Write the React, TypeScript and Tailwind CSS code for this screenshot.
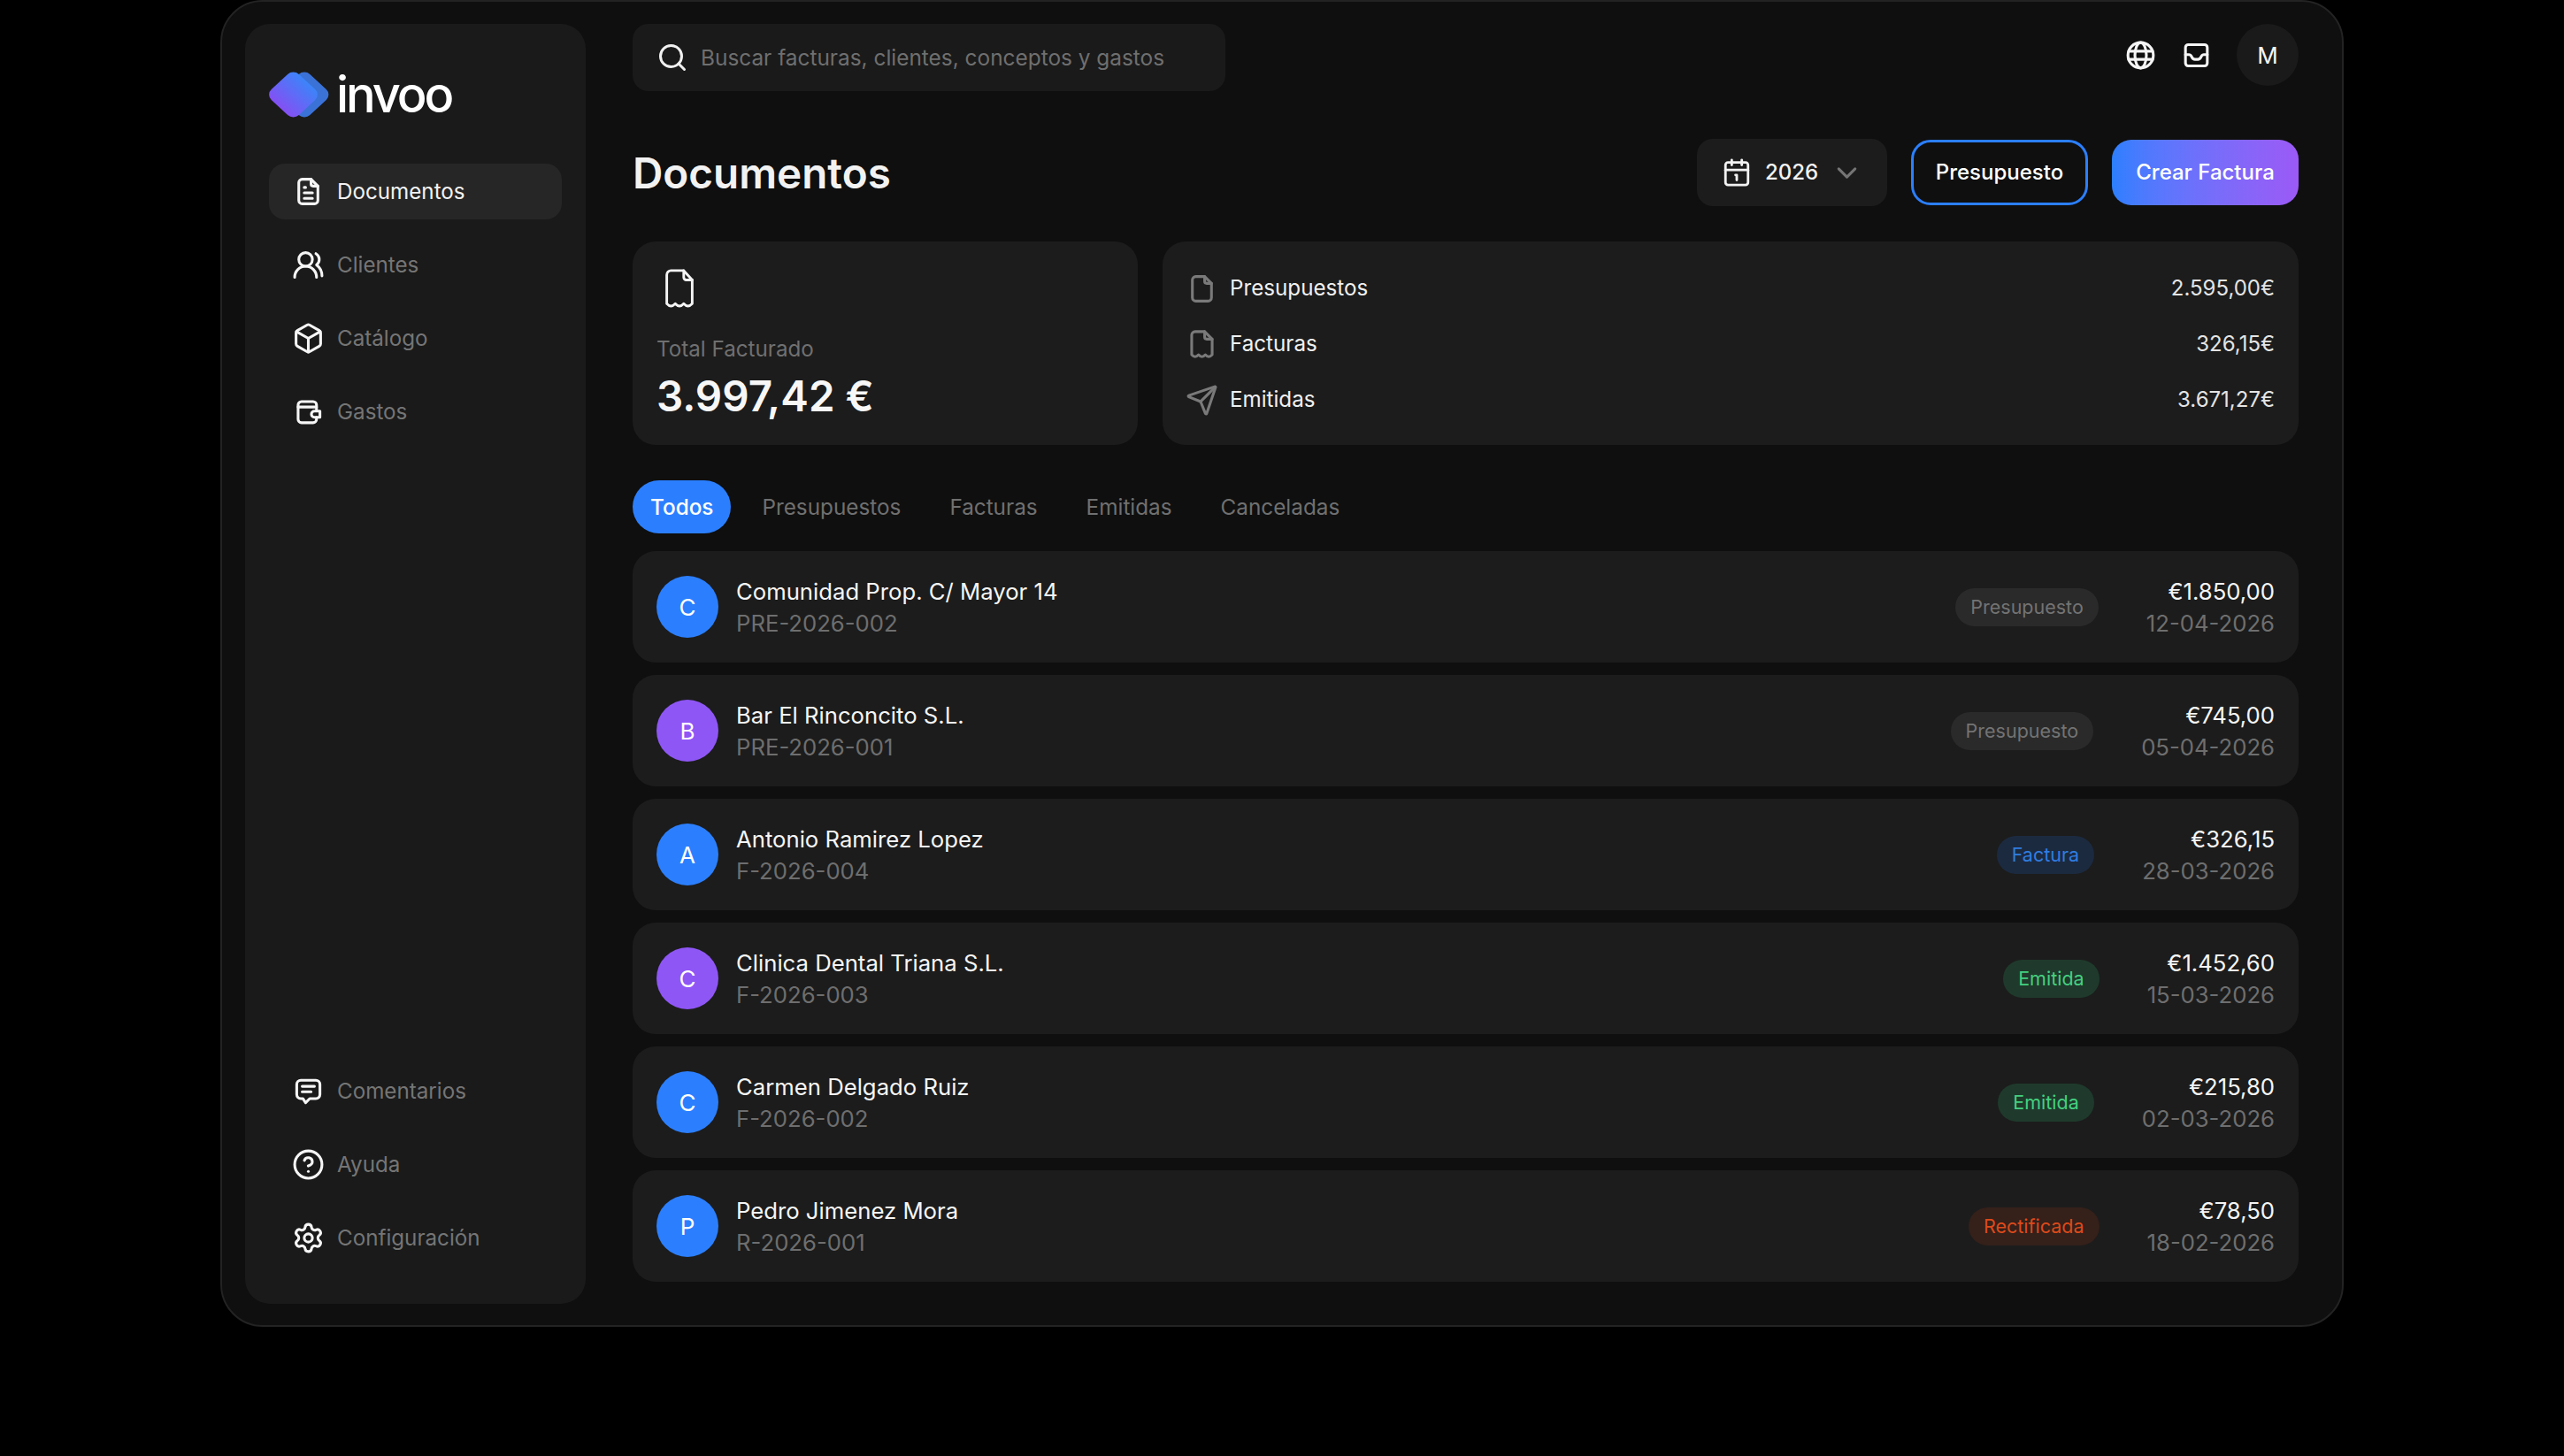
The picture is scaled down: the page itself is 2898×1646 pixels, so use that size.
import React from "react";
import { Search, UsersRound, Box, CircleHelp, Settings, ChevronDown, Send, Calendar1 } from "lucide-react";

type IconProps = { className?: string };

const Svg = ({ className, children, sw = 2 }: IconProps & { children: React.ReactNode; sw?: number }) => (
  <svg viewBox="0 0 24 24" fill="none" stroke="currentColor" strokeWidth={sw} strokeLinecap="round" strokeLinejoin="round" className={className}>
    {children}
  </svg>
);

const DocText = ({ className }: IconProps) => (
  <Svg className={className}>
    <path d="M7.500 3h6.500L19 8v10.500a2.500 2.500 0 0 1-2.500 2.500h-9A2.500 2.500 0 0 1 5 18.500v-13A2.500 2.500 0 0 1 7.500 3z" />
    <path d="M14 3v3.500A1.500 1.500 0 0 0 15.500 8H19" />
    <path d="M9 9h1M9 13h6M9 17h6" />
  </Svg>
);
const FilePlain = ({ className }: IconProps) => (
  <Svg className={className}>
    <path d="M7.500 3h6.500L19 8v10.500a2.500 2.500 0 0 1-2.500 2.500h-9A2.500 2.500 0 0 1 5 18.500v-13A2.500 2.500 0 0 1 7.500 3z" />
    <path d="M14 3v3.500A1.500 1.500 0 0 0 15.500 8H19" />
  </Svg>
);
const FileReceipt = ({ className }: IconProps) => (
  <Svg className={className}>
    <path d="M7 2.500h7L19.500 8v11.500q-2.500 2.800-5 0q-2.500 2.800-5 0q-2.500 2.800-5 0V5A2.500 2.500 0 0 1 7 2.500z" />
    <path d="M14 2.500v4A1.500 1.500 0 0 0 15.500 8h4" />
  </Svg>
);
const FileReceiptLarge = ({ className }: IconProps) => (
  <Svg className={className} sw={1.5}>
    <path d="M7 1h7.500l5 5.500V20.500q-2.500 2.800-5 0q-2.500 2.800-5 0q-2.500 2.800-5 0V3.500A2.500 2.500 0 0 1 7 1z" />
    <path d="M14.500 1v4A1.500 1.500 0 0 0 16 6.500h3.500" />
  </Svg>
);
const Wallet = ({ className }: IconProps) => (
  <Svg className={className}>
    <path d="M18 11V7a2.500 2.500 0 0 0-2.500-2.500H7A2.500 2.500 0 0 0 4.500 7v10.500A2.500 2.500 0 0 0 7 20h8.500a2.500 2.500 0 0 0 2.500-2.500V16" />
    <path d="M4.500 8.500H18" />
    <path d="M20.500 11.500h-4a2.250 2.250 0 0 0 0 4.500h4z" />
  </Svg>
);
const Comment = ({ className }: IconProps) => (
  <Svg className={className}>
    <path d="M6.500 4h11a3 3 0 0 1 3 3v7.500a3 3 0 0 1-3 3H13l-3 3-2-3H6.500a3 3 0 0 1-3-3V7a3 3 0 0 1 3-3z" />
    <path d="M7.500 8.500h9M7.500 12.500h6.500" />
  </Svg>
);
const GlobeGrid = ({ className }: IconProps) => (
  <Svg className={className}>
    <circle cx="12" cy="12" r="9.300" />
    <ellipse cx="12" cy="12" rx="4.200" ry="9.300" />
    <path d="M3.200 9h17.600M3.200 15h17.600" />
  </Svg>
);
const Tray = ({ className }: IconProps) => (
  <Svg className={className}>
    <rect x="4" y="4.250" width="16" height="15.500" rx="2" />
    <path d="M4 11.500h2.500c1 0 1.500.5 2 1.500.5 1.200 1.300 2 2.500 2h2c1.200 0 2-.8 2.500-2 .5-1 1-1.500 2-1.500H20" />
  </Svg>
);

const Logo = () => (
  <svg viewBox="0 0 68 52" className="h-[52px] w-[68px] shrink-0">
    <defs>
      <linearGradient id="lg1" x1="0" y1="1" x2="0" y2="0">
        <stop offset="0" stopColor="#8450f3" />
        <stop offset="1" stopColor="#3c84f9" />
      </linearGradient>
    </defs>
    <g transform="translate(40 26) scale(1 0.93) rotate(45)">
      <rect x="-22" y="-22" width="44" height="44" rx="9" fill="#3a72d8" />
    </g>
    <g transform="translate(27.500 26) scale(1 0.93) rotate(45)">
      <rect x="-22" y="-22" width="44" height="44" rx="9" fill="url(#lg1)" />
    </g>
  </svg>
);

const NavItem = ({ icon: I, label, active }: { icon: React.ComponentType<IconProps>; label: string; active?: boolean }) => (
  <div className={`flex h-[63px] items-center gap-[14px] rounded-[18px] pl-[26px] text-[24.2px] ${active ? "bg-[#262626] text-[#f2f2f2]" : "text-[#757575]"}`}>
    <I className="h-[37px] w-[37px] shrink-0 text-[#f5f5f5]" />
    <span className="pt-[2px]">{label}</span>
  </div>
);

const StatRow = ({ icon: I, label, value }: { icon: React.ComponentType<IconProps>; label: string; value: string }) => (
  <div className="flex h-[63px] items-center justify-between">
    <div className="flex items-center gap-[13px]">
      <I className="h-[37px] w-[37px] text-[#7a7a7a]" />
      <span className="text-[24.2px] text-[#f0f0f0]">{label}</span>
    </div>
    <span className="text-[24px] text-[#e4e4e4]">{value}</span>
  </div>
);

const badgeStyles: Record<string, string> = {
  Presupuesto: "bg-[#2a2a2a] text-[#737373]",
  Factura: "bg-[#1c2a40] text-[#2f7de0]",
  Emitida: "bg-[#1f3a2c] text-[#44cf80]",
  Rectificada: "bg-[#35201a] text-[#dc4a1a]",
};

const rows = [
  { i: "C", c: "bg-[#2b7fff]", name: "Comunidad Prop. C/ Mayor 14", code: "PRE-2026-002", badge: "Presupuesto", amount: "€1.850,00", date: "12-04-2026" },
  { i: "B", c: "bg-[#8f56f6]", name: "Bar El Rinconcito S.L.", code: "PRE-2026-001", badge: "Presupuesto", amount: "€745,00", date: "05-04-2026" },
  { i: "A", c: "bg-[#2b7fff]", name: "Antonio Ramirez Lopez", code: "F-2026-004", badge: "Factura", amount: "€326,15", date: "28-03-2026" },
  { i: "C", c: "bg-[#8f56f6]", name: "Clinica Dental Triana S.L.", code: "F-2026-003", badge: "Emitida", amount: "€1.452,60", date: "15-03-2026" },
  { i: "C", c: "bg-[#2b7fff]", name: "Carmen Delgado Ruiz", code: "F-2026-002", badge: "Emitida", amount: "€215,80", date: "02-03-2026" },
  { i: "P", c: "bg-[#2b7fff]", name: "Pedro Jimenez Mora", code: "R-2026-001", badge: "Rectificada", amount: "€78,50", date: "18-02-2026" },
];

export default function App() {
  return (
    <div className="flex min-h-screen justify-center bg-black font-['Inter',sans-serif] antialiased">
      <div className="flex h-[1500px] w-[2400px] gap-[53px] rounded-[48px] border-[2px] border-[#232323] bg-[#0f0f0f] pb-[24px] pl-[26px] pr-[49px] pt-[25px]">
        <aside className="flex w-[385px] shrink-0 flex-col rounded-[28px] bg-[#1a1a1a] px-[27px] pb-[43px]">
          <div className="mt-[52px] flex h-[56px] items-center gap-[8px]">
            <Logo />
            <span className="text-[56px] font-medium leading-none tracking-[-0.055em] text-white">invoo</span>
          </div>
          <nav className="mt-[50px] flex flex-col gap-[20px]">
            <NavItem icon={DocText} label="Documentos" active />
            <NavItem icon={UsersRound} label="Clientes" />
            <NavItem icon={Box} label="Catálogo" />
            <NavItem icon={Wallet} label="Gastos" />
          </nav>
          <div className="mt-auto flex flex-col gap-[20px]">
            <NavItem icon={Comment} label="Comentarios" />
            <NavItem icon={CircleHelp} label="Ayuda" />
            <NavItem icon={Settings} label="Configuración" />
          </div>
        </aside>

        <main className="flex min-w-0 flex-1 flex-col">
          <header className="flex h-[76px] items-start justify-between">
            <div className="flex h-full w-[670px] items-center gap-[14px] rounded-[18px] bg-[#1a1a1a] pl-[27px]">
              <Search className="h-[36px] w-[36px] text-[#f0f0f0]" strokeWidth={2} />
              <span className="text-[24.4px] text-[#6f6f6f]">Buscar facturas, clientes, conceptos y gastos</span>
            </div>
            <div className="flex items-center">
              <GlobeGrid className="h-[37px] w-[37px] text-[#f5f5f5]" />
              <Tray className="ml-[26px] h-[37px] w-[37px] text-[#f5f5f5]" />
              <div className="ml-[27px] flex h-[70px] w-[70px] items-center justify-center rounded-full bg-[#1a1a1a] text-[26px] text-[#f5f5f5]">M</div>
            </div>
          </header>

          <div className="mt-[54px] flex h-[76px] items-center justify-between">
            <h1 className="pt-[2px] text-[47.6px] font-semibold text-[#f2f2f2]">Documentos</h1>
            <div className="flex items-center gap-[27px]">
              <div className="flex h-[76px] w-[215px] items-center rounded-[18px] bg-[#1c1c1c] pl-[28px] text-[24px] text-[#f2f2f2]">
                <Calendar1 className="h-[34px] w-[34px]" />
                <span className="ml-[15px] font-medium">2026</span>
                <ChevronDown className="ml-[14px] h-[37px] w-[37px] text-[#757575]" />
              </div>
              <button className="h-[74px] w-[200px] rounded-[22px] border-[3px] border-[#2b7fff] bg-[#0f0f0f] text-[24px] font-medium text-white">Presupuesto</button>
              <button className="h-[74px] w-[211px] rounded-[22px] bg-gradient-to-r from-[#2b7fff] to-[#9b59f6] text-[24px] font-medium text-white">Crear Factura</button>
            </div>
          </div>

          <section className="mt-[40px] flex h-[230px] gap-[28px]">
            <div className="flex w-[571px] shrink-0 flex-col rounded-[26px] bg-[#1c1c1c] px-[27px] pt-[31px]">
              <FileReceiptLarge className="ml-[3px] h-[46px] w-[46px] text-[#f5f5f5]" />
              <span className="mt-[27px] text-[24.2px] leading-[36px] text-[#707070]">Total Facturado</span>
              <span className="mt-[5px] text-[47.5px] font-semibold leading-[60px] text-[#f7f7f7]">3.997,42 €</span>
            </div>
            <div className="flex flex-1 flex-col justify-center rounded-[26px] bg-[#1c1c1c] pl-[26px] pr-[27px] pt-[2px]">
              <StatRow icon={FilePlain} label="Presupuestos" value="2.595,00€" />
              <StatRow icon={FileReceipt} label="Facturas" value="326,15€" />
              <StatRow icon={Send} label="Emitidas" value="3.671,27€" />
            </div>
          </section>

          <div className="mt-[40px] flex h-[60px] items-center gap-[15px] text-[24.3px]">
            <span className="flex h-full items-center rounded-full bg-[#2b7fff] px-[20px] font-medium text-white">Todos</span>
            {["Presupuestos", "Facturas", "Emitidas", "Canceladas"].map((t) => (
              <span key={t} className="px-[20px] text-[#707070]">{t}</span>
            ))}
          </div>

          <div className="mt-[20px] flex flex-col gap-[14px]">
            {rows.map((r) => (
              <div key={r.code} className="flex h-[126px] items-center rounded-[26px] bg-[#1c1c1c] pl-[27px] pr-[27px]">
                <div className={`flex h-[70px] w-[70px] shrink-0 items-center justify-center rounded-full pt-[1px] text-[26px] text-white ${r.c}`}>{r.i}</div>
                <div className="ml-[20px] flex min-w-0 flex-1 flex-col pt-[2px]">
                  <span className="text-[25.7px] leading-[36px] text-[#f5f5f5]">{r.name}</span>
                  <span className="text-[25.7px] leading-[36px] text-[#6e6e6e]">{r.code}</span>
                </div>
                <span className={`mt-[1px] rounded-full px-[17px] text-[21.5px] leading-[43px] ${badgeStyles[r.badge]}`}>{r.badge}</span>
                <div className="ml-[54px] flex flex-col items-end pt-[2px]">
                  <span className="text-[25.7px] leading-[36px] text-[#f5f5f5]">{r.amount}</span>
                  <span className="text-[25.7px] leading-[36px] text-[#6e6e6e]">{r.date}</span>
                </div>
              </div>
            ))}
          </div>
        </main>
      </div>
    </div>
  );
}
